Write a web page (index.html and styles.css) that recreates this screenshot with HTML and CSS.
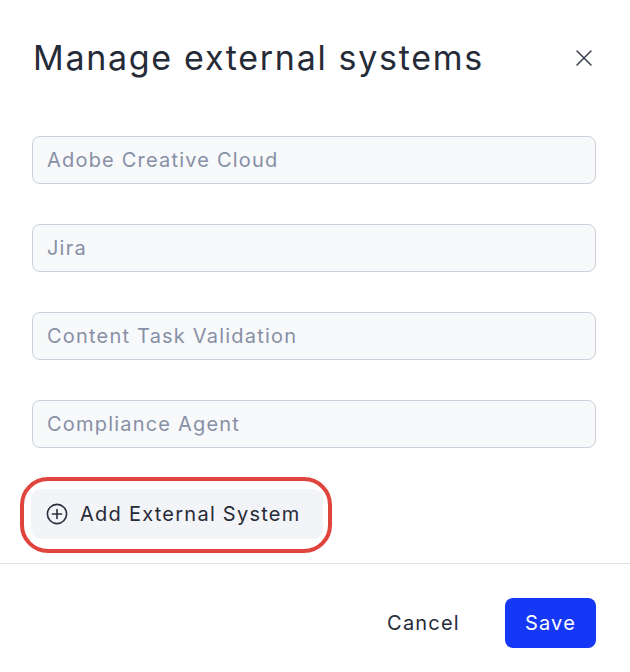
FILE: index.html
```html
<!DOCTYPE html>
<html lang="en">
<head>
<meta charset="utf-8">
<title>Manage external systems</title>
<link rel="stylesheet" href="styles.css">
</head>
<body>
<div class="dialog">
  <div class="header">
    <h1 class="title">Manage external systems</h1>
    <button class="close" aria-label="Close">
      <svg width="18" height="18" viewBox="0 0 18 18" fill="none" stroke="#3a3f4e" stroke-width="1.5" stroke-linecap="round"><path d="M2 2 L16 16 M16 2 L2 16"/></svg>
    </button>
  </div>
  <div class="fields">
    <input class="field" type="text" placeholder="Adobe Creative Cloud">
    <input class="field" type="text" placeholder="Jira">
    <input class="field" type="text" placeholder="Content Task Validation">
    <input class="field" type="text" placeholder="Compliance Agent">
  </div>
  <div class="add-row">
    <button class="add-btn">
      <svg width="22" height="22" viewBox="0 0 22 22" fill="none" stroke="#2a2f3d" stroke-width="1.6" stroke-linecap="round"><circle cx="11" cy="11" r="9.6"/><path d="M11 6.5 V15.5 M6.5 11 H15.5"/></svg>
      <span>Add External System</span>
    </button>
    <div class="highlight"></div>
  </div>
  <div class="footer">
    <button class="btn-cancel">Cancel</button>
    <button class="btn-save">Save</button>
  </div>
</div>
</body>
</html>
```
FILE: styles.css
```css
* { box-sizing: border-box; }
html, body { margin: 0; padding: 0; background: #ffffff; }
body { font-family: Inter, "Noto Sans", sans-serif; color: #262b38; }

.dialog { width: 630px; }

.header {
  display: flex;
  align-items: center;
  justify-content: space-between;
  padding: 38px 32px 0 33px;
}
.title {
  margin: 0;
  font-size: 34px;
  line-height: 40px;
  font-weight: 430;
  color: #262b38;
  letter-spacing: 1.7px;
}
.close {
  border: 0;
  background: transparent;
  padding: 0;
  width: 28px;
  height: 28px;
  display: flex;
  align-items: center;
  justify-content: center;
  cursor: pointer;
}

.fields {
  display: flex;
  flex-direction: column;
  gap: 40px;
  padding: 58px 34px 0 32px;
}
.field {
  height: 48px;
  width: 100%;
  border: 1px solid #cdd0dc;
  border-radius: 8px;
  background: #f8f9fb;
  padding: 0 14px;
  font-family: Inter, "Noto Sans", sans-serif;
  font-size: 20px;
  letter-spacing: 1.2px;
  color: #262b38;
  outline: none;
}
.field::placeholder { color: #8790a6; opacity: 1; }

.add-row {
  position: relative;
  padding: 41px 0 24px 31px;
}
.add-btn {
  display: inline-flex;
  align-items: center;
  gap: 12px;
  height: 50px;
  padding: 0 22px 0 15px;
  border: 0;
  border-radius: 10px;
  background: #f3f4f7;
  font-family: Inter, "Noto Sans", sans-serif;
  font-size: 20px;
  letter-spacing: 1.25px;
  color: #262b38;
  cursor: pointer;
}
.highlight {
  position: absolute;
  left: 20px;
  top: 29px;
  width: 312px;
  height: 76px;
  border: 4.5px solid #df453d;
  border-radius: 28px;
  pointer-events: none;
}

.footer {
  border-top: 1px solid #e1e2e8;
  display: flex;
  justify-content: flex-end;
  align-items: center;
  gap: 25px;
  padding: 34px 34px 0 0;
}
.btn-cancel {
  border: 0;
  background: transparent;
  font-family: Inter, "Noto Sans", sans-serif;
  font-size: 20px;
  letter-spacing: 1.2px;
  color: #262b38;
  padding: 0 20px;
  height: 50px;
  cursor: pointer;
}
.btn-save {
  border: 0;
  background: #1438f5;
  color: #ffffff;
  font-family: Inter, "Noto Sans", sans-serif;
  font-size: 20px;
  letter-spacing: 1.2px;
  height: 50px;
  padding: 0 20px;
  border-radius: 8px;
  cursor: pointer;
}
```
